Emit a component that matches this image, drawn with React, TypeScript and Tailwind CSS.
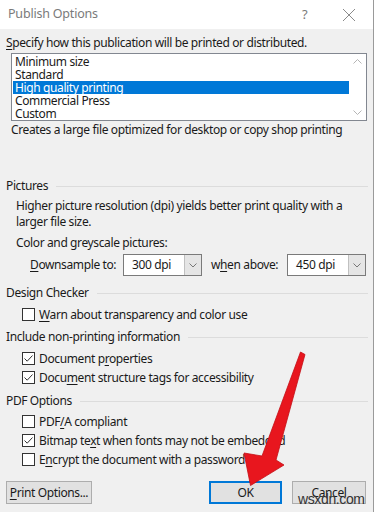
import React from 'react'

const font = { fontFamily: '"Noto Sans", "Open Sans", sans-serif' }

function U({ children }: { children: React.ReactNode }) {
  return <span className="underline underline-offset-2">{children}</span>
}

function Section({ title }: { title: string }) {
  return (
    <div className="flex items-center gap-2 h-4 pr-[5px]">
      <span>{title}</span>
      <div className="flex-1 h-px bg-[#dcdcdc]" />
    </div>
  )
}

function Check({ checked, children }: { checked?: boolean; children: React.ReactNode }) {
  return (
    <div className="flex items-center h-[19px] pl-4 gap-1 whitespace-nowrap">
      <div className="w-[13px] h-[13px] shrink-0 bg-white border border-[#333] flex items-center justify-center">
        {checked && (
          <svg width="11" height="11" viewBox="0 0 11 11">
            <path d="M1.5 5.5 L4.2 8.2 L9.5 2.5" fill="none" stroke="#333" strokeWidth="1" />
          </svg>
        )}
      </div>
      <span>{children}</span>
    </div>
  )
}

function Select({ value }: { value: string }) {
  return (
    <div className="w-[79px] h-[22px] bg-white border border-[#7a7a7a] flex">
      <span className="flex-1 pl-[8px] leading-[20px]">{value}</span>
      <div className="w-[17px] bg-[#e5e5e5] border-l border-[#c0c0c0] flex items-center justify-center">
        <svg width="8" height="5" viewBox="0 0 8 5">
          <path d="M0.5 0.5 L4 4 L7.5 0.5" fill="none" stroke="#777" strokeWidth="1" />
        </svg>
      </div>
    </div>
  )
}

function Btn({ children, primary, w }: { children: React.ReactNode; primary?: boolean; w: string }) {
  return (
    <div
      className={`${w} h-[23px] flex items-center justify-center whitespace-nowrap bg-[#e1e1e1] ${
        primary ? 'border-2 border-[#0078d7]' : 'border border-[#adadad]'
      }`}
    >
      {children}
    </div>
  )
}

export default function App() {
  const items = ['Minimum size', 'Standard', 'High quality printing', 'Commercial Press', 'Custom']
  return (
    <div
      className="relative w-[374px] h-[512px] overflow-hidden bg-[#f0f0f0] text-[12px] tracking-[-0.38px] text-[#1a1a1a] border-r border-[#9a9a9a]"
      style={font}
    >
      {/* title bar */}
      <div className="h-[29px] bg-white flex items-center pl-2 text-[#7a7a7a]">
        <span className="flex-1 text-[12.5px] tracking-[-0.2px]">Publish Options</span>
        <span className="w-[14px] text-[13px] mr-[26px]">?</span>
        <svg width="14" height="14" viewBox="0 0 14 14" className="mr-[17px]">
          <path d="M1 1 L13 13 M13 1 L1 13" stroke="#8a8a8a" strokeWidth="1" />
        </svg>
      </div>

      <div className="pt-[6px] pl-[6px] leading-4">
        <div>
          <U>S</U>pecify how this publication will be printed or distributed.
        </div>

        <div className="mt-[2px] ml-[5px] w-[356px] h-[68px] bg-white border border-[#828790] flex">
          <div className="flex-1 pl-px pt-px">
            {items.map((it, i) => (
              <div
                key={it}
                className={`h-[13px] leading-[13px] pl-[2px] ${i === 2 ? 'bg-[#0078d7] text-white' : ''}`}
              >
                {it}
              </div>
            ))}
          </div>
          <div className="w-[17px] flex flex-col items-center justify-between py-[5px]">
            <svg width="9" height="5" viewBox="0 0 9 5">
              <path d="M0.5 4.5 L4.5 0.5 L8.5 4.5" fill="none" stroke="#b5b5b5" />
            </svg>
            <svg width="9" height="5" viewBox="0 0 9 5">
              <path d="M0.5 0.5 L4.5 4.5 L8.5 0.5" fill="none" stroke="#b5b5b5" />
            </svg>
          </div>
        </div>

        <div className="pl-[5px] mt-px">Creates a large file optimized for desktop or copy shop printing</div>

        <div className="mt-[40px]">
          <Section title="Pictures" />
        </div>
        <div className="pl-[10px] mt-[4px]">
          Higher picture resolution (dpi) yields better print quality with a
          <br />
          larger file size.
        </div>
        <div className="pl-[10px] mt-[5px]">Color and greyscale pictures:</div>
        <div className="flex items-center mt-[3px] h-[22px]">
          <span className="pl-[24px] w-[117px]">
            <U>D</U>ownsample to:
          </span>
          <Select value="300 dpi" />
          <span className="ml-[9px] w-[76px]">
            w<U>h</U>en above:
          </span>
          <Select value="450 dpi" />
        </div>

        <div className="mt-[9px]">
          <Section title="Design Checker" />
        </div>
        <div className="mt-[4px]">
          <Check>
            <U>W</U>arn about transparency and color use
          </Check>
        </div>
        <div className="mt-[5px]">
          <Section title="Include non-printing information" />
        </div>
        <div className="mt-[4px]">
          <Check checked>
            Document p<U>r</U>operties
          </Check>
          <Check checked>
            Docu<U>m</U>ent structure tags for accessibility
          </Check>
        </div>
        <div className="mt-[6px]">
          <Section title="PDF Options" />
        </div>
        <div className="mt-[3px]">
          <Check>
            PDF<U>/</U>A compliant
          </Check>
          <Check checked>
            Bitmap te<U>x</U>t when fonts may not be embedded
          </Check>
          <Check>
            E<U>n</U>crypt the document with a password
          </Check>
        </div>

        <div className="flex items-center mt-[12px]">
          <Btn w="w-[86px]">
            <U>P</U>rint Options...
          </Btn>
          <div className="w-[117px]" />
          <Btn w="w-[73px]" primary>
            OK
          </Btn>
          <div className="w-[10px]" />
          <Btn w="w-[74px]">Cancel</Btn>
        </div>
      </div>

      {/* red arrow annotation */}
      <svg className="absolute left-0 top-0 pointer-events-none" width="374" height="512" viewBox="0 0 374 512">
        <polygon
          points="300.5,352 305,354.5 276,460 284,465 250.5,485.5 244,453 262,456"
          fill="#e8161e"
          stroke="#c40d14"
          strokeWidth="0.8"
          strokeLinejoin="round"
        />
      </svg>
      <div
        className="absolute left-[298px] top-[491px] text-[14px] leading-4 text-[#333]"
        style={{ fontFamily: '"Liberation Sans", sans-serif' }}
      >
        wsxdn.com
      </div>
    </div>
  )
}
